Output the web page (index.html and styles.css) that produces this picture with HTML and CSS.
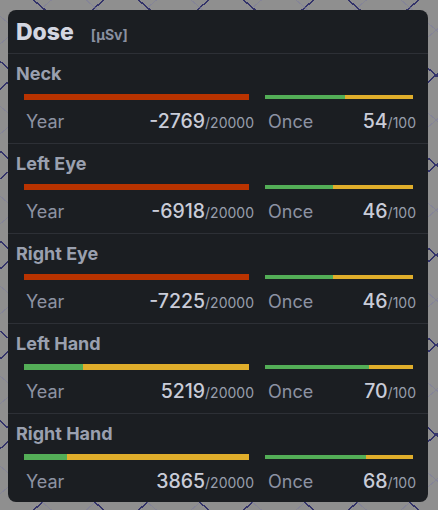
FILE: index.html
```html
<!DOCTYPE html>
<html>
<head>
<meta charset="utf-8">
<link rel="stylesheet" href="styles.css">
</head>
<body>
<div class="panel">
  <div class="header"><span class="title">Dose</span><span class="unit">[µSv]</span></div>

  <div class="section">
    <div class="name">Neck</div>
    <div class="grid">
      <div class="bar bar-year over"></div>
      <div class="bar bar-once"><div class="fill" style="width:54%"></div></div>
      <div class="stat stat-year"><span class="label">Year</span><span class="val"><b>-2769</b><small>/20000</small></span></div>
      <div class="stat stat-once"><span class="label">Once</span><span class="val"><b>54</b><small>/100</small></span></div>
    </div>
  </div>

  <div class="section">
    <div class="name">Left Eye</div>
    <div class="grid">
      <div class="bar bar-year over"></div>
      <div class="bar bar-once"><div class="fill" style="width:46%"></div></div>
      <div class="stat stat-year"><span class="label">Year</span><span class="val"><b>-6918</b><small>/20000</small></span></div>
      <div class="stat stat-once"><span class="label">Once</span><span class="val"><b>46</b><small>/100</small></span></div>
    </div>
  </div>

  <div class="section">
    <div class="name">Right Eye</div>
    <div class="grid">
      <div class="bar bar-year over"></div>
      <div class="bar bar-once"><div class="fill" style="width:46%"></div></div>
      <div class="stat stat-year"><span class="label">Year</span><span class="val"><b>-7225</b><small>/20000</small></span></div>
      <div class="stat stat-once"><span class="label">Once</span><span class="val"><b>46</b><small>/100</small></span></div>
    </div>
  </div>

  <div class="section">
    <div class="name">Left Hand</div>
    <div class="grid">
      <div class="bar bar-year"><div class="fill" style="width:26.1%"></div></div>
      <div class="bar bar-once"><div class="fill" style="width:70%"></div></div>
      <div class="stat stat-year"><span class="label">Year</span><span class="val"><b>5219</b><small>/20000</small></span></div>
      <div class="stat stat-once"><span class="label">Once</span><span class="val"><b>70</b><small>/100</small></span></div>
    </div>
  </div>

  <div class="section last">
    <div class="name">Right Hand</div>
    <div class="grid">
      <div class="bar bar-year"><div class="fill" style="width:19.3%"></div></div>
      <div class="bar bar-once"><div class="fill" style="width:68%"></div></div>
      <div class="stat stat-year"><span class="label">Year</span><span class="val"><b>3865</b><small>/20000</small></span></div>
      <div class="stat stat-once"><span class="label">Once</span><span class="val"><b>68</b><small>/100</small></span></div>
    </div>
  </div>
</div>
</body>
</html>
```

FILE: styles.css
```css
html, body {
  margin: 0;
  padding: 0;
}
body {
  width: 438px;
  height: 510px;
  overflow: hidden;
  background-color: #8f8f8f;
  background-image:
    repeating-linear-gradient(40.6deg, transparent 0, transparent 33px, rgba(120,120,160,0.45) 33px, rgba(120,120,160,0.45) 34px, transparent 34px, transparent 66.8px, #33336a 66.8px, #33336a 68.3px),
    repeating-linear-gradient(139.4deg, transparent 0, transparent 33px, rgba(120,120,160,0.45) 33px, rgba(120,120,160,0.45) 34px, transparent 34px, transparent 66.8px, #33336a 66.8px, #33336a 68.3px);
  font-family: Inter, "Noto Sans", sans-serif;
  padding-top: 10px;
  padding-left: 8px;
  box-sizing: border-box;
}
.panel {
  width: 420px;
  height: 492px;
  background: #1b1e22;
  border-radius: 8px;
  overflow: hidden;
}
.header {
  display: flex;
  align-items: baseline;
  gap: 17px;
  padding: 8px 8px 7px 8px;
  height: 28px;
  border-bottom: 1px solid #2d3036;
}
.title {
  font-size: 23px;
  line-height: 28px;
  font-weight: 800;
  color: #d3d6e1;
}
.unit {
  font-size: 14px;
  font-weight: 700;
  color: #8a90a0;
}
.section {
  padding: 9px 12px 10px 8px;
  border-bottom: 1px solid #2d3036;
}
.section.last {
  border-bottom: none;
}
.name {
  font-size: 18px;
  line-height: 22px;
  font-weight: 700;
  color: #9aa0af;
}
.grid {
  display: grid;
  grid-template-columns: 230px 151px;
  grid-template-rows: 6px 22px;
  column-gap: 11px;
  row-gap: 11px;
  margin: 9px 0 0 8px;
  align-items: center;
}
.bar {
  background: #e0ae2b;
  display: flex;
}
.bar-year {
  width: 225px;
  height: 6px;
}
.bar-once {
  width: 148px;
  height: 4px;
}
.bar.over {
  background: #b93300;
}
.fill {
  background: #53ae57;
  height: 100%;
}
.stat {
  display: flex;
  justify-content: space-between;
  align-items: baseline;
  line-height: 22px;
}
.stat-year .label {
  padding-left: 2px;
}
.stat-once .label {
  padding-left: 3px;
}
.label {
  font-size: 18px;
  color: #8c92a2;
}
.val b {
  font-size: 19.5px;
  font-weight: 500;
  color: #c9ccd8;
}
.val small {
  font-size: 14px;
  color: #989eac;
}
```
